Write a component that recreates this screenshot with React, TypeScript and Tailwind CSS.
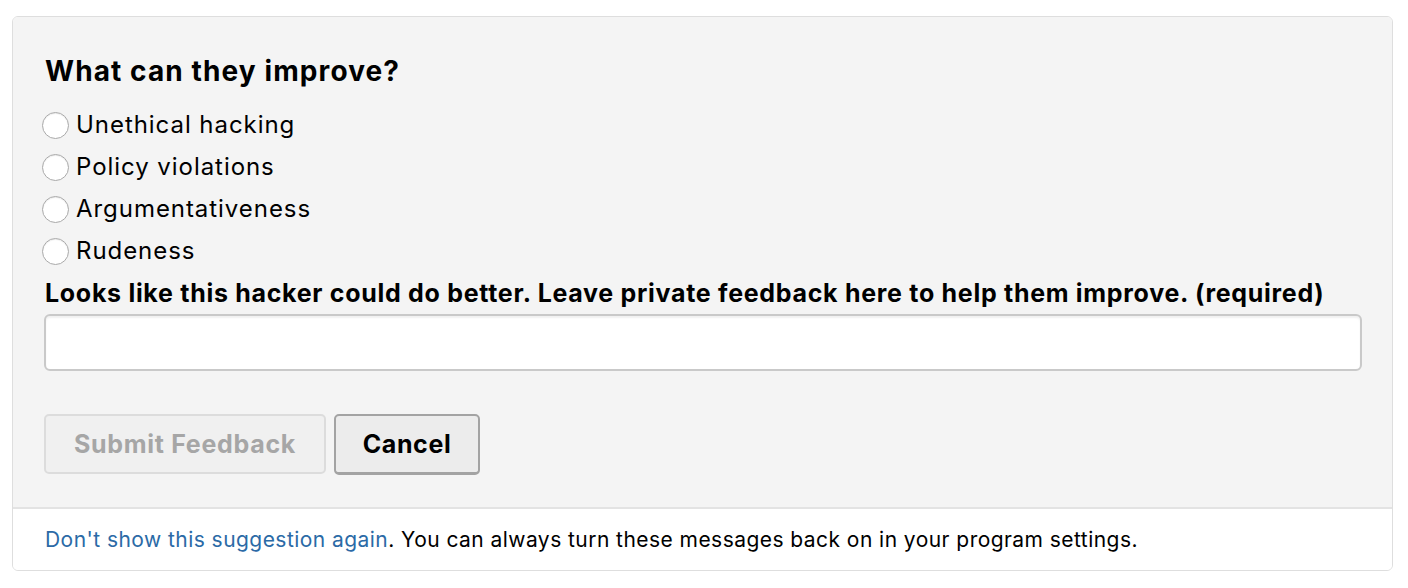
import { useState } from "react";

const options = [
  "Unethical hacking",
  "Policy violations",
  "Argumentativeness",
  "Rudeness",
];

export default function App() {
  const [picked, setPicked] = useState<string | null>(null);

  return (
    <div className="min-h-[588px] bg-white px-3 pt-4 font-['Inter','Liberation_Sans',sans-serif] text-black">
      <div className="w-[1381px] overflow-hidden rounded-md border border-[#dedede]">
        <div className="bg-[#f4f4f4] px-8 pb-8 pt-[38px]">
          <h2 className="h-8 text-[28px] font-bold leading-8 tracking-[1.1px]">
            What can they improve?
          </h2>

          <div className="mt-[17px] flex flex-col">
            {options.map((o) => (
              <label key={o} className="flex h-[42px] cursor-pointer items-center">
                <span
                  onClick={() => setPicked(o)}
                  className="-ml-[3px] mr-[7px] flex h-[27px] w-[27px] items-center justify-center rounded-full border border-[#a9a9a9] bg-white shadow-[inset_0_1px_1px_rgba(0,0,0,0.08)]"
                >
                  {picked === o && <span className="h-[11px] w-[11px] rounded-full bg-[#3b82f6]" />}
                </span>
                <span className="text-[24px] leading-8 tracking-[0.95px]" onClick={() => setPicked(o)}>
                  {o}
                </span>
              </label>
            ))}
          </div>

          <p className="h-[42px] whitespace-nowrap text-[25px] font-bold leading-[42px] tracking-[0.7px]">
            Looks like this hacker could do better. Leave private feedback here to help them improve. (required)
          </p>

          <input
            type="text"
            className="-ml-px block h-[57px] w-[1318px] rounded-md border-2 border-[#c9c9c9] bg-white px-3 text-[22px] shadow-[inset_0_2px_2px_rgba(0,0,0,0.06)] outline-none"
          />

          <div className="mt-[43px] flex gap-2">
            <button
              type="button"
              disabled
              className="-ml-px h-[60px] w-[282px] rounded-[5px] border-2 border-[#dcdcdc] bg-[#f0f0f0] pt-[2px] text-[25px] font-bold tracking-[0.7px] text-[#a6a6a6]"
            >
              Submit Feedback
            </button>
            <button
              type="button"
              className="h-[61px] w-[146px] rounded-[5px] border-2 border-b-[3px] border-[#a3a3a3] bg-[#ececec] pt-[2px] text-[25px] font-bold tracking-[0.6px] text-black"
            >
              Cancel
            </button>
          </div>
        </div>

        <div className="flex h-[63px] items-center border-t-2 border-[#e3e3e3] bg-white px-8 text-[21px] tracking-[0.45px]">
          <p>
            <a href="#" className="text-[#2b6aa6]">
              Don't show this suggestion again
            </a>
            . You can always turn these messages back on in your program settings.
          </p>
        </div>
      </div>
    </div>
  );
}
